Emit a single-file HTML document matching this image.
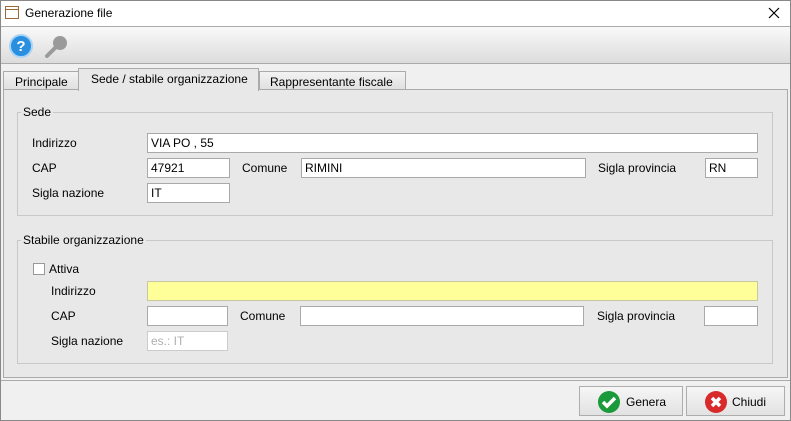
<!DOCTYPE html>
<html><head><style>
*{box-sizing:border-box;margin:0;padding:0}
body{width:791px;height:421px;overflow:hidden;background:#f0f0f0;font-family:"Liberation Sans",Arial,sans-serif;font-size:12px;color:#000;position:relative}
.a{position:absolute}
.inp{position:absolute;background:#fff;border:1px solid #a9a9a9;height:20px;padding:2px 3px;font-size:12px;line-height:14px}
.lbl{position:absolute;font-size:12px}
fieldset{position:absolute;border:1px solid #c8c8c8;}
.leg{position:absolute;background:#e8e8e8;padding:0 2px;font-size:12px}
.btn{position:absolute;top:386px;height:30px;border:1px solid #adadad;background:linear-gradient(#f6f6f6,#e2e2e2);font-size:12px}
</style></head><body>
<div class="a" style="left:0;top:0;width:791px;height:421px;border:1px solid #888"></div>
<div class="a" style="left:1px;top:1px;width:789px;height:25px;background:#fff"></div>
<svg class="a" style="left:5px;top:6px" width="14" height="13"><rect x="0.5" y="0.5" width="13" height="12" fill="#fff" stroke="#9a6a3a"/><line x1="1" y1="3.5" x2="13" y2="3.5" stroke="#9a6a3a"/></svg>
<div class="a" style="left:25px;top:6px;font-size:12px">Generazione file</div>
<svg class="a" style="left:768px;top:7px" width="12" height="12"><path d="M1 1L11 11M11 1L1 11" stroke="#000" stroke-width="1.2"/></svg>
<div class="a" style="left:1px;top:26px;width:789px;height:38px;background:linear-gradient(#f9f9f9,#dcdcdc);border-top:1px solid #aaa;border-bottom:1px solid #aaa"></div>
<svg class="a" style="left:9px;top:34px" width="24" height="24"><circle cx="12" cy="12" r="11" fill="#2b8fe0" stroke="#a8d4f5" stroke-width="2"/><text x="12" y="17" font-family="Liberation Sans" font-weight="bold" font-size="15" fill="#fff" text-anchor="middle">?</text></svg>
<svg class="a" style="left:44px;top:34px" width="24" height="24"><circle cx="16" cy="9" r="7" fill="#9a9a9a"/><line x1="11" y1="14" x2="3" y2="22" stroke="#9a9a9a" stroke-width="4" stroke-linecap="round"/></svg>
<div class="a" style="left:1px;top:64px;width:789px;height:316px;background:#f0f0f0"></div>
<div class="a" style="left:3px;top:89px;width:785px;height:289px;background:#e8e8e8;border:1px solid #aaa"></div>
<div class="a" style="left:3px;top:71px;width:77px;height:19px;border:1px solid #aaa;background:linear-gradient(#f3f3f3,#e0e0e0);padding:3px 0 0 11px">Principale</div>
<div class="a" style="left:259px;top:71px;width:147px;height:19px;border:1px solid #aaa;background:linear-gradient(#f3f3f3,#e0e0e0);padding:3px 0 0 10px">Rappresentante fiscale</div>
<div class="a" style="left:78px;top:68px;width:181px;height:23px;border:1px solid #aaa;border-bottom:none;background:#e8e8e8;padding:3px 0 0 12px">Sede / stabile organizzazione</div>
<fieldset style="left:17px;top:112px;width:756px;height:104px"></fieldset>
<div class="leg" style="left:21px;top:105px">Sede</div>
<div class="lbl" style="left:32px;top:136px">Indirizzo</div>
<div class="inp" style="left:147px;top:133px;width:611px">VIA PO , 55</div>
<div class="lbl" style="left:32px;top:161px">CAP</div>
<div class="inp" style="left:147px;top:158px;width:83px">47921</div>
<div class="lbl" style="left:242px;top:161px">Comune</div>
<div class="inp" style="left:301px;top:158px;width:285px">RIMINI</div>
<div class="lbl" style="left:598px;top:161px">Sigla provincia</div>
<div class="inp" style="left:705px;top:158px;width:53px">RN</div>
<div class="lbl" style="left:32px;top:186px">Sigla nazione</div>
<div class="inp" style="left:147px;top:183px;width:83px">IT</div>
<fieldset style="left:17px;top:240px;width:756px;height:124px"></fieldset>
<div class="leg" style="left:21px;top:233px">Stabile organizzazione</div>
<div class="a" style="left:33px;top:263px;width:12px;height:12px;border:1px solid #999;background:#fff"></div>
<div class="lbl" style="left:49px;top:262px">Attiva</div>
<div class="lbl" style="left:51px;top:284px">Indirizzo</div>
<div class="inp" style="left:147px;top:281px;width:611px;background:#ffff99;border-color:#c8c8a0"></div>
<div class="lbl" style="left:51px;top:309px">CAP</div>
<div class="inp" style="left:147px;top:306px;width:81px"></div>
<div class="lbl" style="left:240px;top:309px">Comune</div>
<div class="inp" style="left:300px;top:306px;width:284px"></div>
<div class="lbl" style="left:597px;top:309px">Sigla provincia</div>
<div class="inp" style="left:704px;top:306px;width:54px"></div>
<div class="lbl" style="left:51px;top:334px">Sigla nazione</div>
<div class="inp" style="left:147px;top:331px;width:81px;color:#b0b0b0;border-color:#ccc">es.: IT</div>
<div class="a" style="left:1px;top:380px;width:789px;height:1px;background:#aaa"></div>
<div class="btn" style="left:579px;width:104px"><svg class="a" style="left:17px;top:3px" width="24" height="24"><circle cx="12" cy="12" r="11" fill="#1a9a3a"/><path d="M6 12l4 4 8-8" stroke="#fff" stroke-width="3.5" fill="none"/></svg><span class="a" style="left:46px;top:8px">Genera</span></div>
<div class="btn" style="left:686px;width:99px"><svg class="a" style="left:17px;top:3px" width="24" height="24"><circle cx="12" cy="12" r="11" fill="#d82a2a"/><path d="M8 8l8 8M16 8l-8 8" stroke="#fff" stroke-width="3.5"/></svg><span class="a" style="left:45px;top:8px">Chiudi</span></div>
</body></html>
